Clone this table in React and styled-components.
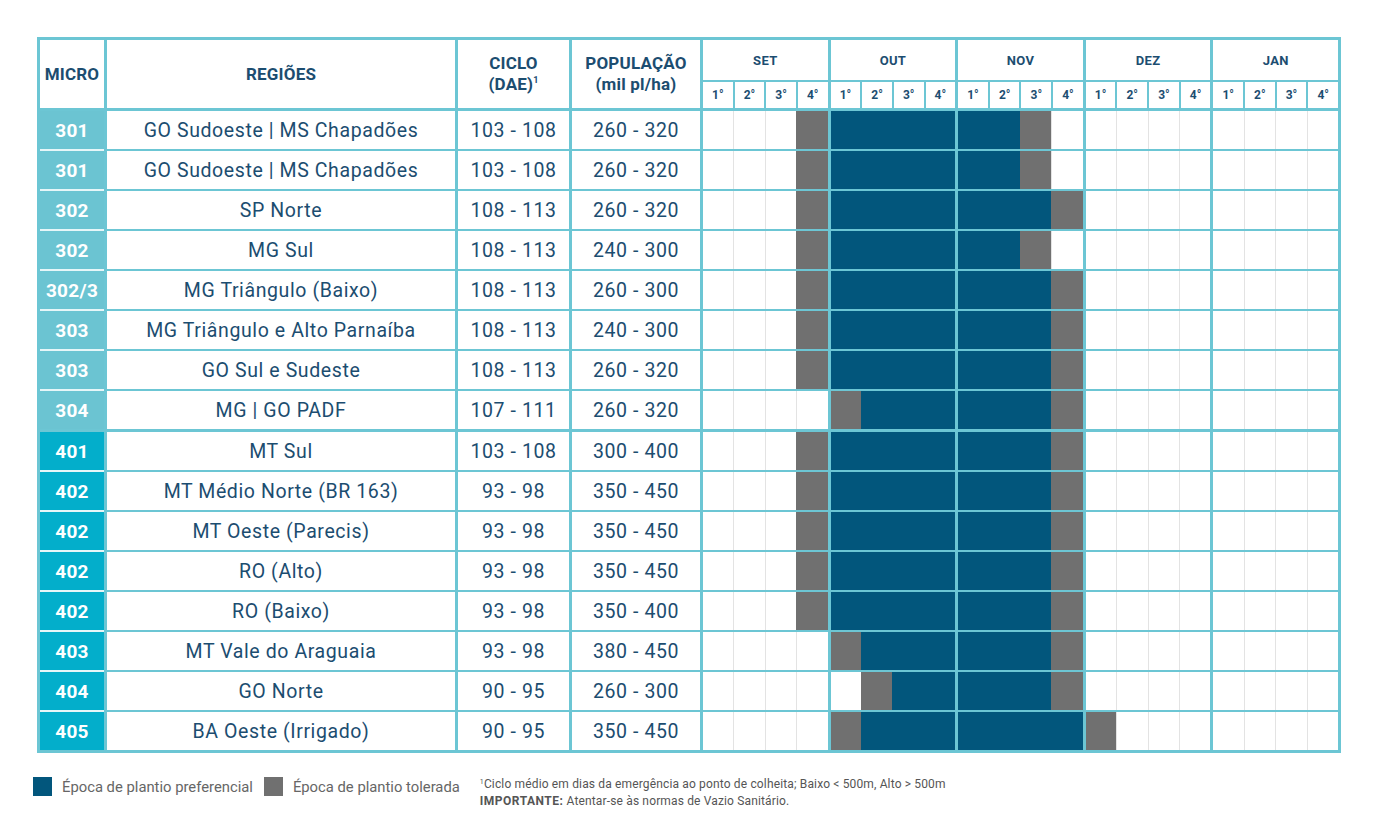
import React from 'react'
import styled, { createGlobalStyle } from 'styled-components'

const teal = '#6cc6d4'
const navy = '#1c4d70'
const fills = { p: '#02567c', t: '#707070' }

const GlobalStyle = createGlobalStyle`
    body {
        margin: 0;
        background: #fff;
        font-family: Roboto, "Liberation Sans", sans-serif;
    }
`

const months = ['SET', 'OUT', 'NOV', 'DEZ', 'JAN']
const weeks = ['1°', '2°', '3°', '4°']

// p = preferencial, t = tolerada; [start, end] em semanas (0 = 1ª semana de SET)
const rows = [
    { micro: '301', region: 'GO Sudoeste | MS Chapadões', ciclo: '103 - 108', pop: '260 - 320', t: [3, 10], p: [4, 9] },
    { micro: '301', region: 'GO Sudoeste | MS Chapadões', ciclo: '103 - 108', pop: '260 - 320', t: [3, 10], p: [4, 9] },
    { micro: '302', region: 'SP Norte', ciclo: '108 - 113', pop: '260 - 320', t: [3, 11], p: [4, 10] },
    { micro: '302', region: 'MG Sul', ciclo: '108 - 113', pop: '240 - 300', t: [3, 10], p: [4, 9] },
    { micro: '302/3', region: 'MG Triângulo (Baixo)', ciclo: '108 - 113', pop: '260 - 300', t: [3, 11], p: [4, 10] },
    { micro: '303', region: 'MG Triângulo e Alto Parnaíba', ciclo: '108 - 113', pop: '240 - 300', t: [3, 11], p: [4, 10] },
    { micro: '303', region: 'GO Sul e Sudeste', ciclo: '108 - 113', pop: '260 - 320', t: [3, 11], p: [4, 10] },
    { micro: '304', region: 'MG | GO PADF', ciclo: '107 - 111', pop: '260 - 320', t: [4, 11], p: [5, 10] },
    { micro: '401', region: 'MT Sul', ciclo: '103 - 108', pop: '300 - 400', t: [3, 11], p: [4, 10], group: 2 },
    { micro: '402', region: 'MT Médio Norte (BR 163)', ciclo: '93 - 98', pop: '350 - 450', t: [3, 11], p: [4, 10], group: 2 },
    { micro: '402', region: 'MT Oeste (Parecis)', ciclo: '93 - 98', pop: '350 - 450', t: [3, 11], p: [4, 10], group: 2 },
    { micro: '402', region: 'RO (Alto)', ciclo: '93 - 98', pop: '350 - 450', t: [3, 11], p: [4, 10], group: 2 },
    { micro: '402', region: 'RO (Baixo)', ciclo: '93 - 98', pop: '350 - 400', t: [3, 11], p: [4, 10], group: 2 },
    { micro: '403', region: 'MT Vale do Araguaia', ciclo: '93 - 98', pop: '380 - 450', t: [4, 11], p: [5, 10], group: 2 },
    { micro: '404', region: 'GO Norte', ciclo: '90 - 95', pop: '260 - 300', t: [5, 11], p: [6, 10], group: 2 },
    { micro: '405', region: 'BA Oeste (Irrigado)', ciclo: '90 - 95', pop: '350 - 450', t: [4, 12], p: [5, 11], group: 2 },
]

const weekState = (row, i) => {
    if (i >= row.p[0] && i <= row.p[1]) return 'p'
    if (i >= row.t[0] && i <= row.t[1]) return 't'
    return ''
}

const columns = '64px 348px 111px 128px repeat(5, 1fr)'

const Page = styled.div`
    padding: 37px 0 0 33px;
`

const Table = styled.div`
    width: 1304px;
    margin-left: 4px;
    box-sizing: border-box;
    border: 3px solid ${teal};
    display: flex;
    flex-direction: column;
    background: ${teal};
`

const Header = styled.div`
    display: grid;
    grid-template-columns: ${columns};
    grid-template-rows: 40px 26px;
    column-gap: 3px;
    row-gap: 2px;
`

const HeadCell = styled.div`
    grid-row: span 2;
    background: #fff;
    display: flex;
    flex-direction: column;
    align-items: center;
    justify-content: center;
    color: ${navy};
    font-weight: 700;
    font-size: 17px;
    line-height: 21px;
    letter-spacing: 0.2px;
    text-align: center;

    sup {
        font-size: 9px;
        line-height: 0;
        vertical-align: 7px;
    }
`

const MonthCell = styled.div`
    grid-row: 1;
    grid-column: ${p => p.$col};
    background: #fff;
    display: flex;
    align-items: center;
    justify-content: center;
    color: ${navy};
    font-weight: 700;
    font-size: 13px;
    letter-spacing: 0.3px;
`

const WeekHeads = styled.div`
    grid-row: 2;
    grid-column: ${p => p.$col};
    display: grid;
    grid-template-columns: repeat(4, 1fr);
    gap: 2px;
`

const WeekHead = styled.div`
    background: #fff;
    display: flex;
    align-items: center;
    justify-content: center;
    color: ${navy};
    font-weight: 700;
    font-size: 12px;
`

const Row = styled.div`
    display: grid;
    grid-template-columns: ${columns};
    column-gap: 3px;
    height: 38px;
    margin-top: ${p => (p.$split ? 3 : 2)}px;
`

const Micro = styled.div`
    background: ${p => (p.$group === 2 ? '#03aecb' : '#6bc4d2')};
    color: #fff;
    font-weight: 700;
    font-size: 19px;
    letter-spacing: 0.3px;
    display: flex;
    align-items: center;
    justify-content: center;
    margin-top: ${p => (p.$first ? 0 : -2)}px;
    border-top: ${p => (p.$first ? 0 : 2)}px solid #e6f6f8;
`

const Cell = styled.div`
    background: #fff;
    color: ${navy};
    font-size: 19.5px;
    letter-spacing: 0.6px;
    display: flex;
    align-items: center;
    justify-content: center;
    white-space: nowrap;
`

const Month = styled.div`
    display: flex;
    background: #fff;
`

const Week = styled.div`
    flex: 1;
    background: ${p => fills[p.$state] || '#fff'};
    border-left: ${p => (p.$first ? 0 : 1)}px solid ${p => fills[p.$state] || '#e3e3e3'};
`

const Legend = styled.div`
    display: flex;
    align-items: flex-start;
    padding-top: 24px;
`

const Key = styled.div`
    display: flex;
    align-items: center;
    gap: 10px;
    margin-right: 11px;
    color: #666;
    font-size: 14.8px;
    height: 19px;
`

const Swatch = styled.span`
    width: 19px;
    height: 19px;
    background: ${p => p.$color};
`

const Notes = styled.div`
    margin-left: 9px;
    margin-top: -1px;
    color: #555;
    font-size: 12px;
    letter-spacing: 0.15px;
    line-height: 17px;

    sup {
        font-size: 7px;
        vertical-align: 4px;
        line-height: 0;
    }

    b {
        font-weight: 700;
        letter-spacing: 0.5px;
    }
`

export default function App() {
    return (
        <Page>
            <GlobalStyle />
            <Table>
                <Header>
                    <HeadCell>MICRO</HeadCell>
                    <HeadCell>REGIÕES</HeadCell>
                    <HeadCell>
                        <span>CICLO</span>
                        <span>(DAE)<sup>1</sup></span>
                    </HeadCell>
                    <HeadCell>
                        <span>POPULAÇÃO</span>
                        <span>(mil pl/ha)</span>
                    </HeadCell>
                    {months.map((m, i) => (
                        <MonthCell key={m} $col={i + 5}>{m}</MonthCell>
                    ))}
                    {months.map((m, i) => (
                        <WeekHeads key={m} $col={i + 5}>
                            {weeks.map(w => <WeekHead key={w}>{w}</WeekHead>)}
                        </WeekHeads>
                    ))}
                </Header>
                {rows.map((row, r) => (
                    <Row key={r} $split={r === 0 || r === 8}>
                        <Micro $group={row.group} $first={r === 0 || r === 8}>{row.micro}</Micro>
                        <Cell>{row.region}</Cell>
                        <Cell>{row.ciclo}</Cell>
                        <Cell>{row.pop}</Cell>
                        {months.map((m, mi) => (
                            <Month key={m}>
                                {weeks.map((w, wi) => (
                                    <Week
                                        key={w}
                                        $first={wi === 0}
                                        $state={weekState(row, mi * 4 + wi)}
                                    />
                                ))}
                            </Month>
                        ))}
                    </Row>
                ))}
            </Table>
            <Legend>
                <Key><Swatch $color={fills.p} />Época de plantio preferencial</Key>
                <Key><Swatch $color={fills.t} />Época de plantio tolerada</Key>
                <Notes>
                    <div><sup>1</sup>Ciclo médio em dias da emergência ao ponto de colheita; Baixo &lt; 500m, Alto &gt; 500m</div>
                    <div><b>IMPORTANTE:</b> Atentar-se às normas de Vazio Sanitário.</div>
                </Notes>
            </Legend>
        </Page>
    )
}
